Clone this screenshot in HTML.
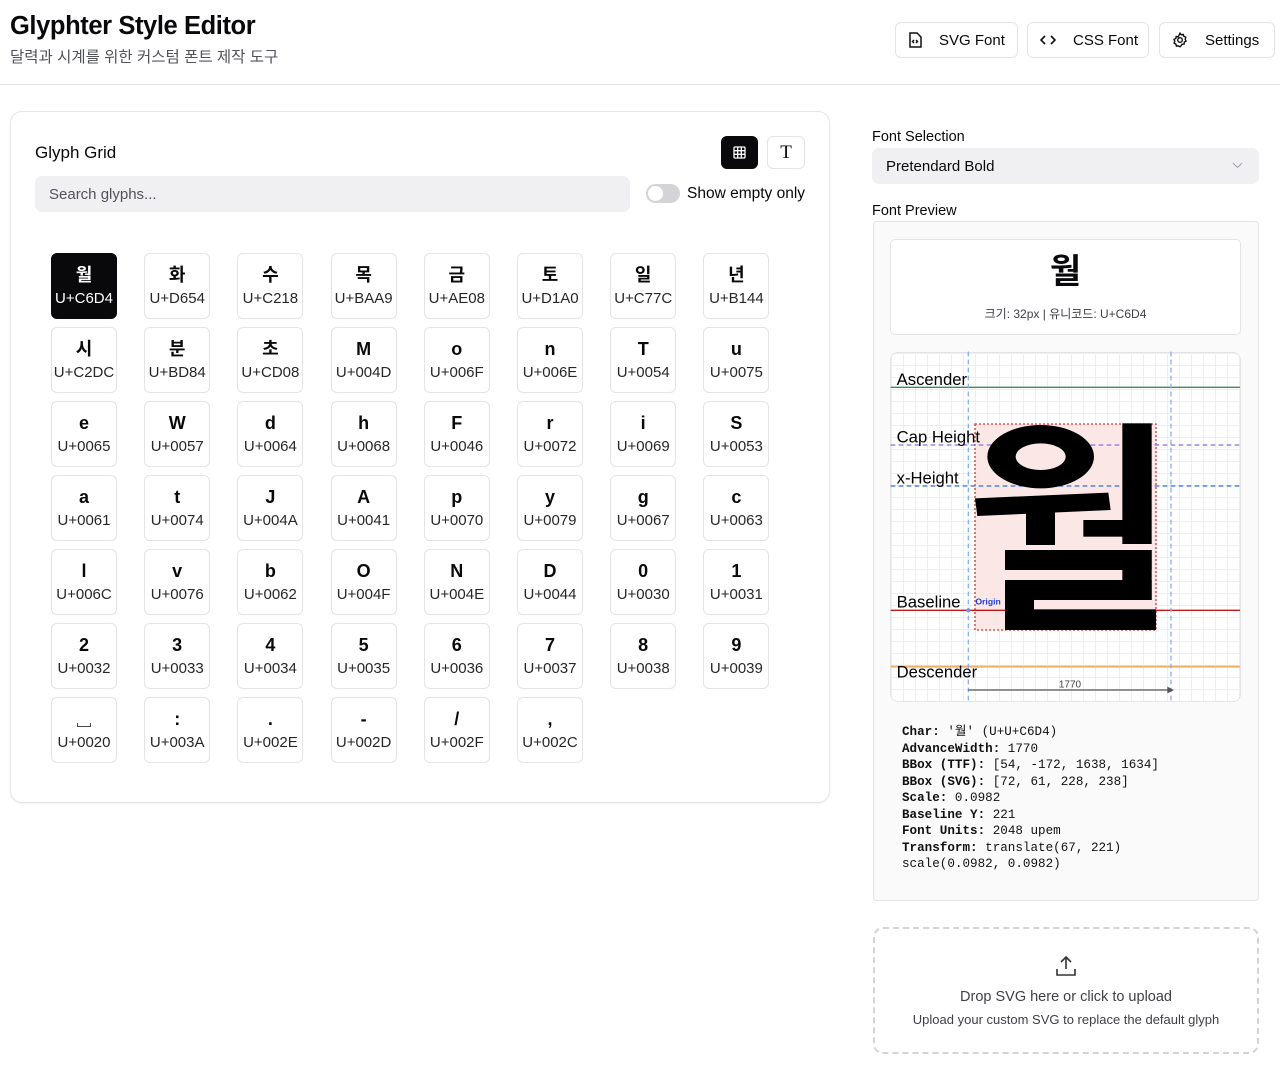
<!DOCTYPE html>
<html><head><meta charset="utf-8">
<style>
*{box-sizing:border-box;margin:0;padding:0}
body{width:1280px;height:1078px;background:#fff;font-family:"Liberation Sans","Noto Sans CJK KR",sans-serif;color:#09090b;position:relative;overflow:hidden}
.a{position:absolute}
.btn{position:absolute;top:22px;height:36px;border:1px solid #e4e4e7;border-radius:6px;font-size:15px;font-weight:500;display:flex;align-items:center;padding-left:12px;background:#fff}
.btn svg{margin-right:17px}
.cell{position:absolute;width:66px;height:66px;border:1px solid #e4e4e7;border-radius:6px;text-align:center;background:#fff}
.cell b{display:block;font-size:18px;font-weight:700;margin-top:10px;height:22px;line-height:22px}
.cell span{display:block;font-size:15px;color:#27272a;margin-top:4px}
.cell.sel{background:#09090b;border-color:#09090b}
.cell.sel b,.cell.sel span{color:#fff}
.mono{font-family:"Liberation Mono","Noto Sans CJK KR",monospace;font-size:12.6px;line-height:16.5px;color:#111}
</style></head><body>
<div class="a" style="left:10px;top:12px;font-size:25.5px;font-weight:700;letter-spacing:-0.4px">Glyphter Style Editor</div>
<div class="a" style="left:10px;top:45px;font-size:15.5px;color:#52525b">달력과 시계를 위한 커스텀 폰트 제작 도구</div>

<div class="btn" style="left:895px;width:123px"><svg width="14" height="16" viewBox="0 0 14 16" fill="none" stroke="#111" stroke-width="1.5"><path d="M2 1h7l4 4v10H2z"/><path d="M6 8l-1.5 1.5L6 11M8 8l1.5 1.5L8 11"/></svg>SVG Font</div>
<div class="btn" style="left:1027px;width:122px"><svg width="16" height="14" viewBox="0 0 16 14" fill="none" stroke="#111" stroke-width="1.6"><path d="M5 3L1 7l4 4M11 3l4 4-4 4"/></svg>CSS Font</div>
<div class="btn" style="left:1159px;width:116px"><svg width="16" height="16" viewBox="0 0 16 16" fill="none" stroke="#111" stroke-width="1.4"><circle cx="8" cy="8" r="2.3"/><path d="M8 1.2l1.3 1.6 2-.4.6 2 1.9.9-.6 2 .9 1.8-1.8 1-.2 2-2 .1-1.1 1.7L8 14.8l-1.7-.9-1.9.2-.5-2-1.8-1 .7-1.8-.8-1.9 1.8-.9.4-2 2 .3z"/></svg>Settings</div>
<div class="a" style="left:0;top:84px;width:1280px;height:1px;background:#e4e4e7"></div>

<div class="a" style="left:10px;top:111px;width:820px;height:692px;border:1px solid #e4e4e7;border-radius:12px;box-shadow:0 1px 2px rgba(0,0,0,.05)"></div>
<div class="a" style="left:35px;top:143px;font-size:17px">Glyph Grid</div>
<div class="a" style="left:721px;top:136px;width:37px;height:33px;background:#09090b;border-radius:6px"><svg class="a" style="left:12px;top:10px" width="13" height="13" viewBox="0 0 13 13" fill="none" stroke="#fff" stroke-width="1.3"><rect x="1" y="1" width="11" height="11" rx="1"/><path d="M1 4.7h11M1 8.3h11M4.7 1v11M8.3 1v11"/></svg></div>
<div class="a" style="left:767px;top:136px;width:38px;height:33px;border:1px solid #e4e4e7;border-radius:6px;text-align:center;font-family:'Liberation Serif',serif;font-size:19px;line-height:31px">T</div>
<div class="a" style="left:35px;top:176px;width:595px;height:36px;background:#f0f0f2;border-radius:7px;font-size:15px;color:#52525b;padding:10px 14px">Search glyphs...</div>
<div class="a" style="left:646px;top:184px;width:34px;height:19px;background:#d4d4d8;border-radius:10px"><div class="a" style="left:2px;top:2px;width:15px;height:15px;background:#fff;border-radius:50%"></div></div>
<div class="a" style="left:687px;top:185px;font-size:15.5px">Show empty only</div>

<div id="grid"></div>

<div class="a" style="left:872px;top:129px;font-size:14.5px;font-weight:500">Font Selection</div>
<div class="a" style="left:872px;top:148px;width:387px;height:36px;background:#f0f0f2;border-radius:7px;font-size:15px;padding:10px 14px">Pretendard Bold<svg class="a" style="right:16px;top:14px" width="11" height="7" viewBox="0 0 11 7" fill="none" stroke="#a1a1aa" stroke-width="1"><path d="M1 1l4.5 4.5L10 1"/></svg></div>
<div class="a" style="left:872px;top:203px;font-size:14.5px;font-weight:500">Font Preview</div>
<div class="a" style="left:873px;top:221px;width:386px;height:680px;border:1px solid #e4e4e7;background:#fafafa;border-radius:4px"></div>
<div class="a" style="left:890px;top:239px;width:351px;height:96px;background:#fff;border:1px solid #e4e4e7;border-radius:5px;text-align:center">
<div style="font-size:34px;font-weight:700;line-height:40px;margin-top:12px">월</div>
<div style="font-size:12px;color:#3f3f46;margin-top:13px">크기: 32px | 유니코드: U+C6D4</div></div>

<div class="a" style="left:890px;top:352px;width:351px;height:350px;background:#fff;border:1px solid #e4e4e7;border-radius:8px;overflow:hidden;
background-image:linear-gradient(#eeeef0 1px,transparent 1px),linear-gradient(90deg,#eeeef0 1px,transparent 1px);background-size:12px 12px"></div>
<svg class="a" style="left:870px;top:340px" width="390" height="370" viewBox="0 0 1170 1110">
<rect x="315" y="252" width="543" height="618" fill="#fbe7e6" stroke="#d33" stroke-width="4" stroke-dasharray="6 6"/>
<line x1="62" y1="142" x2="1110" y2="142" stroke="#3b8f5a" stroke-width="4"/>
<line x1="62" y1="315" x2="1110" y2="315" stroke="#8b6fe0" stroke-width="4" stroke-dasharray="14 10"/>
<line x1="62" y1="438" x2="1110" y2="438" stroke="#2f6fe0" stroke-width="4" stroke-dasharray="14 10"/>
<line x1="62" y1="811" x2="1110" y2="811" stroke="#c01818" stroke-width="4"/>
<line x1="62" y1="980" x2="1110" y2="980" stroke="#f0b060" stroke-width="6"/>
<line x1="295" y1="35" x2="295" y2="1090" stroke="#8ab0f0" stroke-width="4" stroke-dasharray="14 10"/>
<line x1="903" y1="35" x2="903" y2="1090" stroke="#8ab0f0" stroke-width="4" stroke-dasharray="14 10"/>
<g fill="#000">
<ellipse cx="512" cy="350" rx="160" ry="95"/>
<ellipse cx="512" cy="350" rx="75" ry="40" fill="#fbe7e6"/>
<polygon points="315,475 715,458 722,510 322,528"/>
<rect x="468" y="515" width="87" height="100"/>
<rect x="757" y="250" width="88" height="362"/>
<rect x="640" y="540" width="120" height="50"/>
<rect x="405" y="630" width="440" height="60"/>
<rect x="757" y="630" width="88" height="150"/>
<rect x="405" y="720" width="440" height="60"/>
<rect x="405" y="720" width="87" height="150"/>
<rect x="405" y="808" width="453" height="62"/>
</g>
<circle cx="295" cy="811" r="6" fill="#6f8fe0"/>
<line x1="295" y1="1050" x2="895" y2="1050" stroke="#555" stroke-width="4"/>
<polygon points="912,1050 892,1040 892,1060" fill="#555"/>
<g font-family="Liberation Sans, sans-serif" font-size="50" fill="#000">
<text x="80" y="135">Ascender</text>
<text x="80" y="308">Cap Height</text>
<text x="80" y="430">x-Height</text>
<text x="80" y="803">Baseline</text>
<text x="80" y="1013">Descender</text>
</g>
<text x="316" y="793" font-family="Liberation Sans, sans-serif" font-size="26" font-weight="700" fill="#1f3fd0">Origin</text>
<text x="600" y="1042" text-anchor="middle" font-family="Liberation Sans, sans-serif" font-size="30" fill="#444">1770</text>
</svg>

<div class="a mono" style="left:902px;top:724px"><b>Char:</b> '월' (U+U+C6D4)<br><b>AdvanceWidth:</b> 1770<br><b>BBox (TTF):</b> [54, -172, 1638, 1634]<br><b>BBox (SVG):</b> [72, 61, 228, 238]<br><b>Scale:</b> 0.0982<br><b>Baseline Y:</b> 221<br><b>Font Units:</b> 2048 upem<br><b>Transform:</b> translate(67, 221)<br>scale(0.0982, 0.0982)</div>

<div class="a" style="left:873px;top:927px;width:386px;height:127px;border:2px dashed #d4d4d8;border-radius:10px;text-align:center">
<svg style="margin-top:26px" width="22" height="22" viewBox="0 0 22 22" fill="none" stroke="#333" stroke-width="1.6"><path d="M11 14V2M6 7l5-5 5 5M2 14v6h18v-6"/></svg>
<div style="font-size:14.5px;color:#3f3f46;margin-top:7px">Drop SVG here or click to upload</div>
<div style="font-size:13px;color:#3f3f46;margin-top:7px">Upload your custom SVG to replace the default glyph</div></div>

<script>
var d=[["월","U+C6D4"],["화","U+D654"],["수","U+C218"],["목","U+BAA9"],["금","U+AE08"],["토","U+D1A0"],["일","U+C77C"],["년","U+B144"],
["시","U+C2DC"],["분","U+BD84"],["초","U+CD08"],["M","U+004D"],["o","U+006F"],["n","U+006E"],["T","U+0054"],["u","U+0075"],
["e","U+0065"],["W","U+0057"],["d","U+0064"],["h","U+0068"],["F","U+0046"],["r","U+0072"],["i","U+0069"],["S","U+0053"],
["a","U+0061"],["t","U+0074"],["J","U+004A"],["A","U+0041"],["p","U+0070"],["y","U+0079"],["g","U+0067"],["c","U+0063"],
["l","U+006C"],["v","U+0076"],["b","U+0062"],["O","U+004F"],["N","U+004E"],["D","U+0044"],["0","U+0030"],["1","U+0031"],
["2","U+0032"],["3","U+0033"],["4","U+0034"],["5","U+0035"],["6","U+0036"],["7","U+0037"],["8","U+0038"],["9","U+0039"],
["␣","U+0020"],[":","U+003A"],[".","U+002E"],["-","U+002D"],["/","U+002F"],[",","U+002C"]];
var h="";d.forEach(function(g,i){var c=i%8,r=Math.floor(i/8);
h+='<div class="cell'+(i==0?' sel':'')+'" style="left:'+(51+c*93.2)+'px;top:'+(253+r*74)+'px"><b>'+g[0]+'</b><span>'+g[1]+'</span></div>';});
document.getElementById("grid").innerHTML=h;
</script>
</body></html>
